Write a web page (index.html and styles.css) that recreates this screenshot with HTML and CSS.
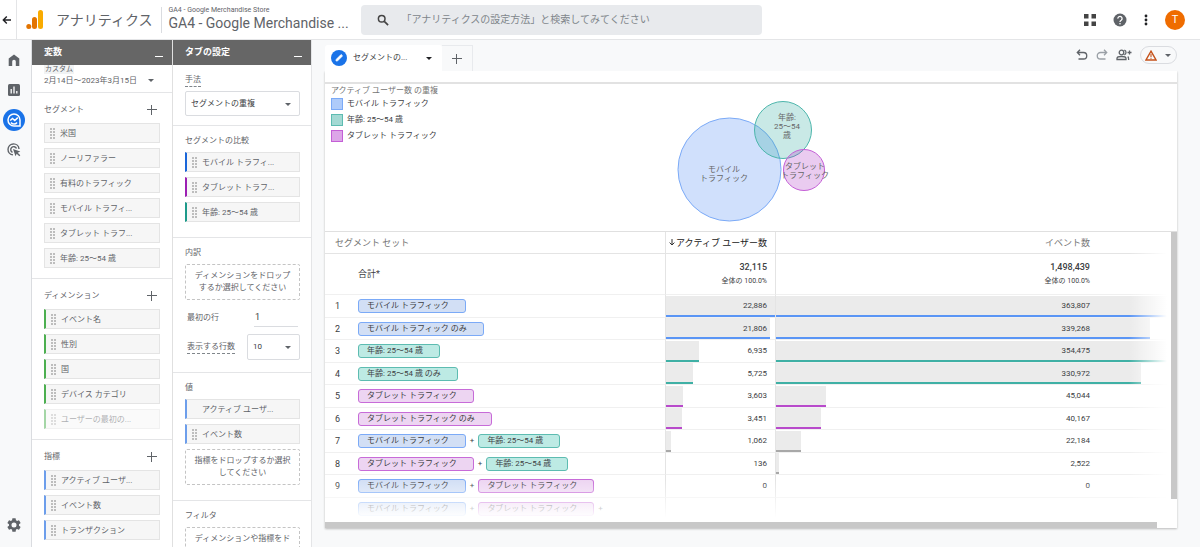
FILE: index.html
```html
<!DOCTYPE html>
<html lang="ja">
<head>
<meta charset="utf-8">
<title>アナリティクス</title>
<link rel="stylesheet" href="styles.css">
</head>
<body>
<header class="topbar">
  <button class="icon-btn back" aria-label="戻る"><svg width="10" height="10" viewBox="0 0 10 10"><path d="M9 5H1.5M4.8 1.5L1.3 5l3.5 3.5" fill="none" stroke="#202124" stroke-width="1.4"/></svg></button>
  <svg class="logo" width="18" height="20" viewBox="0 0 18 20"><rect x="12" y="0" width="5" height="19" rx="2.5" fill="#f9ab00"/><rect x="6" y="7" width="5" height="12" rx="2.5" fill="#e37400"/><circle cx="2.8" cy="16.5" r="2.5" fill="#e37400"/></svg>
  <span class="product">アナリティクス</span>
  <button class="account"><span class="account-name">GA4 - Google Merchandise Store</span><span class="property">GA4 - Google Merchandise ...</span></button>
  <label class="search">
    <svg width="12" height="12" viewBox="0 0 12 12"><circle cx="4.7" cy="4.7" r="3.3" fill="none" stroke="#444" stroke-width="1.5"/><path d="M7.3 7.3l3.8 3.8" stroke="#444" stroke-width="1.7"/></svg>
    <input type="search" aria-label="検索" placeholder="「アナリティクスの設定方法」と検索してみてください">
  </label>
  <div class="top-actions">
    <button class="icon-btn" aria-label="アプリ"><svg width="12" height="12" viewBox="0 0 12 12" fill="#444"><path d="M0 0h4.500v4.500H0zM7.500 0H12v4.500H7.500zM0 7.500h4.500V12H0zM7.500 7.500H12V12H7.500z"/></svg></button>
    <button class="icon-btn" aria-label="ヘルプ"><svg width="14" height="14" viewBox="0 0 14 14"><circle cx="7" cy="7" r="6.5" fill="#5f6368"/><path d="M4.9 5.6a2.1 2.1 0 1 1 3.3 1.6C7.4 7.700 7 8 7 9" fill="none" stroke="#fff" stroke-width="1.3"/><circle cx="7" cy="10.700" r=".8" fill="#fff"/></svg></button>
    <button class="icon-btn" aria-label="その他"><svg width="4" height="12" viewBox="0 0 4 12" fill="#202124"><circle cx="2" cy="2" r="1.4"/><circle cx="2" cy="6" r="1.4"/><circle cx="2" cy="10" r="1.4"/></svg></button>
    <button class="avatar">T</button>
  </div>
</header>

<div class="shell">
  <nav class="rail">
    <a href="#" aria-label="ホーム"><svg width="12" height="12" viewBox="0 0 12 12"><path d="M.7 4.600L6 .5l5.300 4.100V12H7.800V7.500a1.800 1.800 0 0 0-3.600 0V12H.7z" fill="#5f6368"/></svg></a>
    <a href="#" aria-label="レポート"><svg width="12" height="12" viewBox="0 0 12 12"><rect width="12" height="12" rx="1.500" fill="#5f6368"/><path d="M3.200 5v4.500M6 2.500v7M8.800 7v2.500" stroke="#fff" stroke-width="1.300"/></svg></a>
    <a href="#" class="active" aria-label="探索"><svg width="14" height="14" viewBox="0 0 14 14" fill="none" stroke="#fff" stroke-width="1.500"><path d="M7 13A6 6 0 1 1 13 7v6z"/><path d="M3.200 7.500L5.500 5.500l2.300 2L10.800 4.600"/><path d="M4 9.500a3.600 3.600 0 0 0 6 0"/></svg></a>
    <a href="#" aria-label="広告"><svg width="14" height="14" viewBox="0 0 14 14"><path d="M6 11.900A5.500 5.500 0 1 1 12 6M5.500 9.400A3 3 0 1 1 9.500 5.500" fill="none" stroke="#5f6368" stroke-width="1.400"/><path d="M6 6l7.300 2.500-2.600 1.200 2.600 2.600-1 1-2.600-2.600-1.200 2.600z" fill="#5f6368"/></svg></a>
    <a href="#" class="settings" aria-label="管理"><svg width="14" height="14" viewBox="2 2 20 20"><path fill="#5f6368" d="M19.140 12.940c.04-.3.060-.61.060-.94s-.02-.64-.07-.94l2.030-1.580a.49.49 0 0 0 .12-.61l-1.920-3.320a.49.49 0 0 0-.59-.22l-2.390.96a7 7 0 0 0-1.620-.94l-.36-2.540A.48.48 0 0 0 13.920 2.400h-3.840a.48.48 0 0 0-.47.410l-.36 2.540c-.59.240-1.130.570-1.620.940l-2.390-.96a.48.48 0 0 0-.59.220L2.740 8.870a.47.47 0 0 0 .12.610l2.030 1.580c-.05.300-.09.630-.09.940s.02.640.07.940l-2.030 1.580a.49.49 0 0 0-.12.610l1.920 3.320c.12.220.37.290.59.220l2.390-.96c.5.380 1.030.700 1.620.940l.36 2.540c.05.240.24.410.48.410h3.840c.24 0 .44-.17.470-.41l.36-2.540a7 7 0 0 0 1.620-.94l2.390.96c.22.080.47 0 .59-.22l1.920-3.320a.47.47 0 0 0-.12-.61zM12 15.600A3.600 3.600 0 1 1 12 8.400a3.600 3.600 0 0 1 0 7.200z"/></svg></a>
  </nav>

  <section class="panel variables">
    <div class="panel-head"><h2>変数</h2><button class="minimize" aria-label="最小化"></button></div>
    <button class="date"><span class="tag">カスタム</span><span class="range">2月14日～2023年3月15日<i class="caret"></i></span></button>
    <div class="group">
      <div class="group-title"><h3>セグメント</h3><button class="plus" aria-label="セグメントを追加"></button></div>
      <ul class="chips">
        <li class="chip">米国</li>
        <li class="chip">ノーリファラー</li>
        <li class="chip">有料のトラフィック</li>
        <li class="chip">モバイル トラフィ...</li>
        <li class="chip">タブレット トラフ...</li>
        <li class="chip">年齢: 25～54 歳</li>
      </ul>
    </div>
    <div class="group">
      <div class="group-title"><h3>ディメンション</h3><button class="plus" aria-label="ディメンションを追加"></button></div>
      <ul class="chips">
        <li class="chip bar green">イベント名</li>
        <li class="chip bar green">性別</li>
        <li class="chip bar green">国</li>
        <li class="chip bar green">デバイス カテゴリ</li>
        <li class="chip bar green faded">ユーザーの最初の...</li>
      </ul>
    </div>
    <div class="group">
      <div class="group-title"><h3>指標</h3><button class="plus" aria-label="指標を追加"></button></div>
      <ul class="chips">
        <li class="chip bar sky">アクティブ ユーザ...</li>
        <li class="chip bar sky">イベント数</li>
        <li class="chip bar sky">トランザクション</li>
      </ul>
    </div>
  </section>

  <section class="panel tab-settings">
    <div class="panel-head"><h2>タブの設定</h2><button class="minimize" aria-label="最小化"></button></div>
    <div class="group tight">
      <div class="group-title"><label class="hint" for="method">手法</label></div>
      <span class="select"><select id="method"><option>セグメントの重複</option></select><i class="caret"></i></span>
    </div>
    <div class="group">
      <div class="group-title"><h3>セグメントの比較</h3></div>
      <ul class="chips">
        <li class="chip bar blue">モバイル トラフィ...</li>
        <li class="chip bar purple">タブレット トラフ...</li>
        <li class="chip bar teal">年齢: 25～54 歳</li>
      </ul>
    </div>
    <div class="group breakdown">
      <div class="group-title"><h3>内訳</h3></div>
      <div class="drop">ディメンションをドロップ<br>するか選択してください</div>
      <div class="field first"><label for="start">最初の行</label><input id="start" type="text" value="1"></div>
      <div class="field"><label class="hint" for="rows">表示する行数</label><span class="select small"><select id="rows"><option>10</option></select><i class="caret"></i></span></div>
    </div>
    <div class="group">
      <div class="group-title"><h3>値</h3></div>
      <ul class="chips">
        <li class="chip bar sky no-grip">アクティブ ユーザ...</li>
        <li class="chip bar sky">イベント数</li>
      </ul>
      <div class="drop after">指標をドロップするか選択<br>してください</div>
    </div>
    <div class="group">
      <div class="group-title"><h3>フィルタ</h3></div>
      <div class="drop">ディメンションや指標をド</div>
    </div>
  </section>

  <main class="canvas">
    <div class="tabs">
      <button class="tab"><svg width="16" height="16" viewBox="0 0 16 16"><circle cx="8" cy="8" r="8" fill="#1a73e8"/><path d="M5 11l.3-1.700 4.800-4.800 1.400 1.400-4.800 4.800z" fill="#fff" stroke="#fff" stroke-width=".8"/></svg><span>セグメントの...</span><i class="caret dark"></i></button>
      <button class="tab-add" aria-label="タブを追加"><span class="plus"></span></button>
      <div class="tools">
        <button class="icon-btn" aria-label="元に戻す"><svg width="12" height="12" viewBox="0 0 12 12" fill="none" stroke="#5f6368" stroke-width="1.300"><path d="M4 .8L1.300 3.500 4 6.200M1.500 3.500h6a3.200 3.200 0 0 1 0 6.500H2.500"/></svg></button>
        <button class="icon-btn" aria-label="やり直す"><svg width="12" height="12" viewBox="0 0 12 12" fill="none" stroke="#9aa0a6" stroke-width="1.300"><path d="M8 .8l2.700 2.700L8 6.200M10.500 3.500h-6a3.200 3.200 0 0 0 0 6.500h5"/></svg></button>
        <button class="icon-btn" aria-label="共有"><svg width="16" height="12" viewBox="0 0 16 12" fill="none" stroke="#5f6368" stroke-width="1.300"><circle cx="5.500" cy="3.500" r="2.300"/><path d="M1 10.500V9.300C1 8 4 7.500 5.500 7.500S10 8 10 9.300v1.200zM8.300 1.200a2.400 2.400 0 0 1 0 4.600M11.800 7.500c.7.700.9 1.500.9 3.500M13.500 1.500v4M11.500 3.500h4"/></svg></button>
        <button class="status" aria-label="データの品質"><svg width="12" height="11" viewBox="0 0 12 11"><path d="M6 1.200L11 10H1z" fill="none" stroke="#c5521a" stroke-width="1.400"/><path d="M6 4v3M6 7.800v1" stroke="#c5521a" stroke-width="1.100"/></svg><i class="caret"></i></button>
      </div>
    </div>

    <div class="card">
      <div class="overlap">
        <div class="legend">
          <h3>アクティブ ユーザー数 の重複</h3>
          <ul>
            <li><i class="swatch s-blue"></i>モバイル トラフィック</li>
            <li><i class="swatch s-teal"></i>年齢: 25～54 歳</li>
            <li><i class="swatch s-purple"></i>タブレット トラフィック</li>
          </ul>
        </div>
        <svg class="venn" width="160" height="122" viewBox="671 100 160 122">
          <circle cx="729.500" cy="169.500" r="51.500" fill="#4285f4" fill-opacity=".25" stroke="#7baaf7"/>
          <circle cx="783" cy="130" r="28.500" fill="#26a69a" fill-opacity=".25" stroke="#4db6ac"/>
          <circle cx="804" cy="170" r="20.500" fill="#ab30c4" fill-opacity=".25" stroke="#c45fd6"/>
          <g class="venn-text">
            <text x="724" y="172">モバイル</text><text x="724" y="181">トラフィック</text>
            <text x="787" y="120">年齢:</text><text x="787" y="129">25～54</text><text x="787" y="138">歳</text>
            <text x="805" y="169">タブレット</text><text x="805" y="178">トラフィック</text>
          </g>
        </svg>
      </div>

      <div class="table-area">
        <div class="table-view">
          <table>
            <colgroup><col class="c-set"><col class="c-users"><col></colgroup>
            <thead>
              <tr><th class="set">セグメント セット</th><th class="sorted"><svg width="6" height="7" viewBox="0 0 6 7"><path d="M3 0v6M.6 3.600L3 6l2.400-2.400" fill="none" stroke="#333"/></svg>アクティブ ユーザー数</th><th class="last">イベント数</th></tr>
            </thead>
            <tbody>
              <tr class="total"><td>合計*</td><td><b>32,115</b><small>全体の 100.0%</small></td><td class="last"><b>1,498,439</b><small>全体の 100.0%</small></td></tr>
              <tr><td><div class="set-cell"><span class="n">1</span><span class="pill p-blue">モバイル トラフィック</span></div></td><td><div class="meter m-blue"><i style="width:100%"></i><span>22,886</span></div></td><td class="last"><div class="meter m-blue"><i style="width:100%"></i><span>363,807</span></div></td></tr>
              <tr><td><div class="set-cell"><span class="n">2</span><span class="pill p-blue">モバイル トラフィック のみ</span></div></td><td><div class="meter m-blue"><i style="width:95%"></i><span>21,806</span></div></td><td class="last"><div class="meter m-blue"><i style="width:94.7%"></i><span>339,268</span></div></td></tr>
              <tr><td><div class="set-cell"><span class="n">3</span><span class="pill p-teal">年齢: 25～54 歳</span></div></td><td><div class="meter m-teal"><i style="width:30%"></i><span>6,935</span></div></td><td class="last"><div class="meter m-teal"><i style="width:99%"></i><span>354,475</span></div></td></tr>
              <tr><td><div class="set-cell"><span class="n">4</span><span class="pill p-teal">年齢: 25～54 歳 のみ</span></div></td><td><div class="meter m-teal"><i style="width:25%"></i><span>5,725</span></div></td><td class="last"><div class="meter m-teal"><i style="width:92.3%"></i><span>330,972</span></div></td></tr>
              <tr><td><div class="set-cell"><span class="n">5</span><span class="pill p-purple">タブレット トラフィック</span></div></td><td><div class="meter m-purple"><i style="width:16%"></i><span>3,603</span></div></td><td class="last"><div class="meter m-purple"><i style="width:12.6%"></i><span>45,044</span></div></td></tr>
              <tr><td><div class="set-cell"><span class="n">6</span><span class="pill p-purple">タブレット トラフィック のみ</span></div></td><td><div class="meter m-purple"><i style="width:15%"></i><span>3,451</span></div></td><td class="last"><div class="meter m-purple"><i style="width:11.3%"></i><span>40,167</span></div></td></tr>
              <tr><td><div class="set-cell"><span class="n">7</span><span class="pill p-blue">モバイル トラフィック</span><span>+</span><span class="pill p-teal">年齢: 25～54 歳</span></div></td><td><div class="meter"><i style="width:4.5%"></i><span>1,062</span></div></td><td class="last"><div class="meter"><i style="width:6.3%"></i><span>22,184</span></div></td></tr>
              <tr><td><div class="set-cell"><span class="n">8</span><span class="pill p-purple">タブレット トラフィック</span><span>+</span><span class="pill p-teal">年齢: 25～54 歳</span></div></td><td><div class="meter"><i style="width:0"></i><span>136</span></div></td><td class="last"><div class="meter"><i style="width:0.8%"></i><span>2,522</span></div></td></tr>
              <tr><td><div class="set-cell"><span class="n">9</span><span class="pill p-blue">モバイル トラフィック</span><span>+</span><span class="pill p-purple">タブレット トラフィック</span></div></td><td><div class="meter"><i style="width:0"></i><span>0</span></div></td><td class="last"><div class="meter"><i style="width:0"></i><span>0</span></div></td></tr>
              <tr class="next"><td><div class="set-cell"><span class="n"></span><span class="pill p-blue">モバイル トラフィック</span><span>+</span><span class="pill p-purple">タブレット トラフィック</span><span>+</span></div></td><td></td><td class="last"></td></tr>
            </tbody>
          </table>
        </div>
        <div class="vscroll"></div>
      </div>
      <div class="hscroll"></div>
    </div>
  </main>
</div>
</body>
</html>
```
FILE: styles.css
```css
* { box-sizing: border-box; }
body {
  margin: 0;
  height: 100vh;
  overflow: hidden;
  display: flex;
  flex-direction: column;
  background: #f8f9fa;
  color: #5f6368;
  font: 8px/12px Roboto, "Noto Sans CJK JP", sans-serif;
}
button, input, select { font: inherit; color: inherit; border: 0; background: none; padding: 0; margin: 0; border-radius: 0; }
h2, h3, ul { margin: 0; padding: 0; font: inherit; list-style: none; }
svg { flex: none; display: block; }

.icon-btn { display: flex; align-items: center; justify-content: center; }
.caret { border: 3px solid transparent; border-top-color: #5f6368; border-bottom: 0; flex: none; }
.caret.dark { border-top-color: #202124; }
.plus {
  width: 10px;
  height: 10px;
  background:
    linear-gradient(#5f6368, #5f6368) 0 4px / 10px 1px no-repeat,
    linear-gradient(#5f6368, #5f6368) 4px 0 / 1px 10px no-repeat;
}

/* top bar */
.topbar {
  flex: none;
  display: flex;
  align-items: center;
  height: 40px;
  background: #fff;
  border-bottom: 1px solid #e4e5e7;
}
.back { width: 17px; height: 39px; padding-right: 2px; border-right: 1px solid #e4e5e7; }
.logo { margin-left: 9px; }
.product { margin-left: 12px; font-size: 14px; line-height: 20px; white-space: nowrap; }
.account {
  display: flex;
  flex-direction: column;
  margin-left: 9px;
  padding-left: 6px;
  width: 200px;
  border-left: 1px solid #dadce0;
  text-align: left;
  white-space: nowrap;
}
.account-name { font-size: 7px; line-height: 6px; }
.property { font-size: 14px; line-height: 20px; }
.search {
  display: flex;
  align-items: center;
  gap: 12px;
  flex: 0 1 401px;
  height: 30px;
  padding: 0 16px;
  background: #e8eaed;
  border-radius: 4px;
}
.search input { flex: 1; font-size: 10px; line-height: 16px; outline: 0; }
.search input::placeholder { color: #80868b; opacity: 1; }
.top-actions { display: flex; align-items: center; gap: 17px; margin-left: auto; padding-right: 15px; }
.avatar { width: 20px; height: 20px; border-radius: 50%; background: #ef6c00; color: #fff; font-size: 11px; line-height: 20px; }

/* layout */
.shell { flex: 1; min-height: 0; display: grid; grid-template: minmax(0, 1fr) / 32px 140px 140px 1fr; }
.rail { display: flex; flex-direction: column; align-items: center; gap: 8px; padding: 9px 3px 11px 0; border-right: 1px solid #dadce0; }
.rail a { display: flex; align-items: center; justify-content: center; width: 22px; height: 22px; border-radius: 50%; }
.rail .active { background: #1a73e8; }
.rail .settings { margin-top: auto; }

/* side panels */
.panel { background: #fff; overflow: hidden; min-width: 0; }
.tab-settings { border-left: 1px solid #e0e0e0; border-right: 1px solid #e4e5e7; }
.panel-head { display: flex; align-items: center; justify-content: space-between; height: 25px; padding: 0 9px 2px 12px; background: #666; color: #fff; }
.panel-head h2 { font-size: 9px; font-weight: 700; }
.minimize { width: 8px; height: 10px; border-bottom: 1px solid #fff; }
.date { display: flex; flex-direction: column; justify-content: flex-start; width: 100%; height: 28px; padding: 0 18px 0 12px; text-align: left; border-bottom: 1px solid #e4e5e7; }
.tag { width: 30px; height: 9px; font-size: 7px; line-height: 9px; text-align: center; background: #f1f3f4; }
.range { display: flex; align-items: center; justify-content: space-between; width: 100%; height: 13px; line-height: 13px; white-space: nowrap; }
.group { padding: 7px 12px 10px; border-bottom: 1px solid #e4e5e7; }
.group-title { display: flex; align-items: center; justify-content: space-between; height: 20px; margin-bottom: 3px; }
.group-title .plus { margin-right: 3px; }
.tab-settings .group { padding: 5px 11px 15px 12px; }
.tab-settings .group.tight { padding-bottom: 9px; }
.tab-settings .group.breakdown { padding-bottom: 12px; }
.tab-settings .group-title { margin-bottom: 1px; }
.hint { border-bottom: 1px dashed #80868b; }

.chips { display: grid; gap: 5px; }
.chip {
  display: flex;
  align-items: center;
  gap: 5px;
  height: 20px;
  padding: 2px 4px 0 5px;
  background: #f6f6f6;
  border: 1px solid #e4e4e4;
  white-space: nowrap;
}
.chip::before {
  content: "";
  width: 5px;
  height: 11px;
  margin-top: -2px;
  background: radial-gradient(circle at 1px 1px, #bdbdbd 1px, transparent 1px) 0 0 / 3px 3px;
}
.chip.bar { border-left-width: 2px; }
.chip.no-grip::before { visibility: hidden; }
.green { border-left-color: #4caf50; }
.sky { border-left-color: #6d9eeb; }
.blue { border-left-color: #1a66d9; }
.purple { border-left-color: #9c1fb3; }
.teal { border-left-color: #1d9a8a; }
.faded { opacity: .5; }

.select { position: relative; display: block; height: 25px; border: 1px solid #dadce0; border-radius: 2px; }
.select select { width: 100%; height: 100%; padding: 0 5px; appearance: none; color: #3c4043; outline: 0; }
.select .caret { position: absolute; right: 8px; top: 11px; pointer-events: none; }
.select.small { width: 53px; height: 26px; }
.drop {
  height: 36px;
  padding-top: 5px;
  border: 1px dashed #c4c4c4;
  border-radius: 2px;
  text-align: center;
  white-space: nowrap;
}
.drop.after { margin-top: 5px; }
.field { display: flex; align-items: center; justify-content: space-between; padding-left: 2px; }
.field.first { height: 19px; margin: 8px 2px 7px 0; }
.field input { width: 44px; height: 19px; padding-left: 1px; border-bottom: 1px solid #dadce0; font-size: 9px; color: #3c4043; outline: 0; }

/* canvas */
.canvas { display: flex; flex-direction: column; min-width: 0; padding: 5px 23px 19px 13px; }
.tabs { display: flex; height: 26px; }
.tab { display: flex; align-items: center; width: 117px; padding: 0 10px 0 6px; background: #fff; border-radius: 3px 3px 0 0; color: #3c4043; }
.tab span { margin: 0 auto 0 6px; white-space: nowrap; }
.tab-add { display: flex; align-items: center; justify-content: center; width: 31px; border: 1px solid #e8eaed; border-left: 0; border-bottom: 0; }
.tools { display: flex; align-items: center; gap: 8px; margin-left: auto; height: 20px; }
.status { display: flex; align-items: center; gap: 8px; height: 18px; width: 37px; padding-left: 4px; border: 1px solid #dadce0; border-radius: 9px; }
.card { flex: 1; min-height: 0; display: flex; flex-direction: column; background: #fff; box-shadow: 0 1px 2px #bbb; clip-path: inset(0 -3px -3px -3px); }
.overlap { flex: none; display: grid; height: 149px; margin-top: 11px; border-top: 2px solid #e2e2e2; }
.legend, .venn { grid-area: 1 / 1; }
.legend { padding: 1px 6px; color: #3c4043; white-space: nowrap; }
.legend h3 { color: #757575; }
.legend ul { display: grid; gap: 4px; margin-top: 1px; }
.legend li { display: flex; align-items: center; gap: 4px; }
.swatch { width: 12px; height: 12px; border: 1px solid; }
.s-blue { background: #aecbfa; border-color: #7baaf7; }
.s-teal { background: #a3d9d3; border-color: #5dbcb1; }
.s-purple { background: #dda6e8; border-color: #c45fd6; }
.venn { justify-self: center; margin-top: 16px; }
.venn-text { font-size: 8px; fill: #666; text-anchor: middle; }

/* table */
.table-area { flex: 1; min-height: 0; display: grid; grid-template: minmax(0, 1fr) / 1fr 6px; border-top: 1px solid #e0e0e0; }
.table-view { position: relative; overflow: hidden; }
.table-view::before, .table-view::after { content: ""; position: absolute; z-index: 1; right: 0; bottom: 0; }
.table-view::before { top: 0; width: 42px; background: linear-gradient(to right, transparent, #fff 90%); }
.table-view::after { left: 0; height: 42px; background: linear-gradient(to bottom, transparent, #fff 90%); }
.vscroll { height: 267px; background: #c8c8c8; }
.hscroll { flex: none; height: 6px; margin-right: 20px; background: #c8c8c8; }
table { width: 100%; table-layout: fixed; border-collapse: separate; border-spacing: 0; color: #3c4043; }
.c-set { width: 341px; }
.c-users { width: 110px; }
th, td { height: 22px; padding: 0; border-right: 1px solid #e4e4e4; border-bottom: 1px solid #f0f0f0; text-align: right; font-weight: 400; white-space: nowrap; }
th { font-size: 9px; border-bottom-color: #e4e4e4; }
th svg { display: inline; margin-right: 1px; }
th.last, td.last { border-right: 0; }
th.set { padding-left: 10px; text-align: left; color: #757575; }
.sorted { padding-right: 8px; color: #212121; }
th.last { padding-right: 81px; color: #757575; }
tbody tr:nth-child(even) td { height: 23px; }
tbody .total td { height: 41px; padding-right: 8px; }
tbody .total td:first-child { padding-left: 33px; text-align: left; font-size: 9px; }
tbody .total .last { padding-right: 81px; }
.total b { display: block; font-weight: 500; font-size: 9px; }
.total small { display: block; padding-top: 2px; font-size: 7px; }
.set-cell { display: flex; align-items: center; gap: 4px; }
.n { width: 15px; margin: 0 4px 0 10px; text-align: left; font-size: 9px; }
.pill { height: 14px; padding: 0 16px 0 8px; border: 1px solid; border-radius: 3px; }
.p-blue { background: #d2dff5; border-color: #7baaf7; }
.p-teal { background: #bdeae4; border-color: #5dbcb1; }
.p-purple { background: #edd5f2; border-color: #c76bd8; }
.meter { display: grid; align-items: center; height: 21px; }
.meter i, .meter span { grid-area: 1 / 1; }
.meter i { height: 21px; background: linear-gradient(#ebebeb, #ebebeb) padding-box; border-bottom: 2px solid #a8a8a8; }
.meter span { padding-right: 8px; }
.last .meter span { padding-right: 81px; }
.meter.m-blue i { border-bottom-color: #5a95f5; }
.meter.m-teal i { border-bottom-color: #3fb0a5; }
.meter.m-purple i { border-bottom-color: #b84acb; }
```
